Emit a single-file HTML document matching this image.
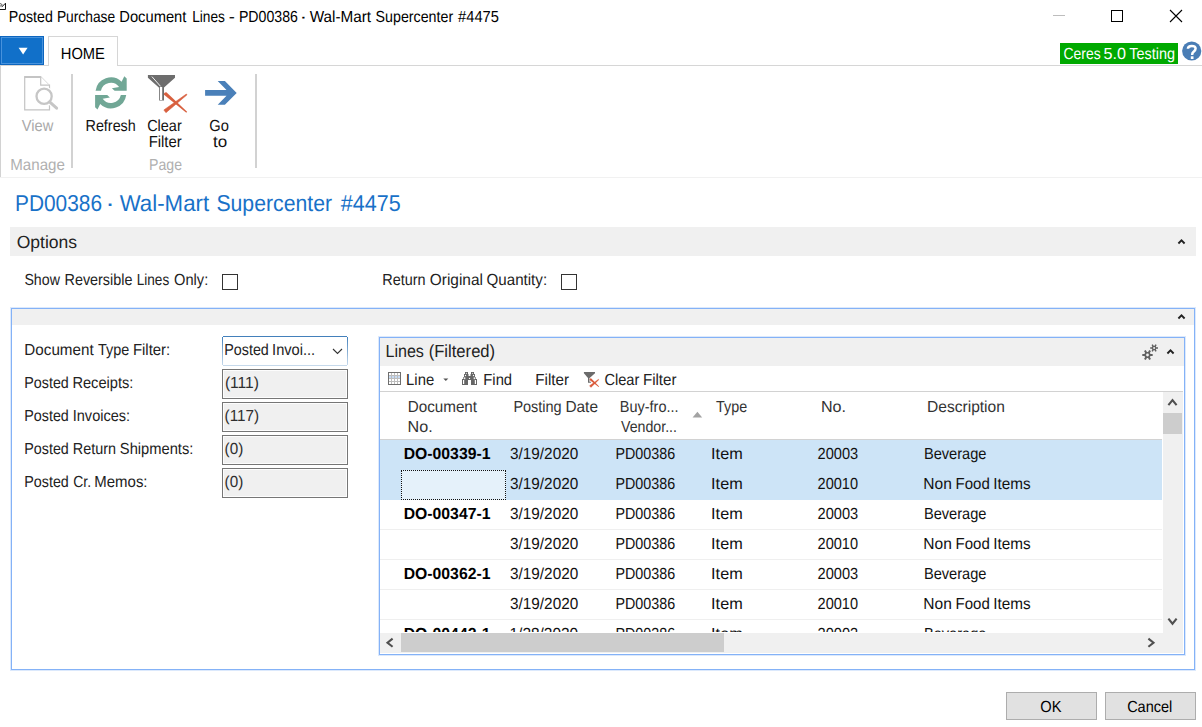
<!DOCTYPE html>
<html>
<head>
<meta charset="utf-8">
<title>Posted Purchase Document Lines</title>
<style>
*{box-sizing:border-box;margin:0;padding:0}
html,body{width:1202px;height:727px;overflow:hidden;background:#fff}
body{font-family:"Liberation Sans",sans-serif;color:#000;position:relative;font-size:16px;text-rendering:geometricPrecision}
.t{position:absolute;left:0;top:0;white-space:nowrap;line-height:1;transform-origin:0 0}
.b{position:absolute}
</style>
</head>
<body>
<!-- TITLE BAR -->
<svg class="b" style="left:0;top:2px" width="8" height="9" viewBox="0 0 8 9"><path d="M0 7.5 L5.5 7.5 L5.5 1.2 L1.6 5.1" stroke="#151515" stroke-width="1" fill="none"/><path d="M0 1.6 Q1.9 1.6 2.3 3.2 M0 4 Q1.2 4.2 1.8 3.2" stroke="#333" stroke-width="0.8" fill="none"/></svg>
<div class="b" style="left:1053px;top:15px;width:12px;height:1px;background:#bdbdbd"></div>
<div class="b" style="left:1111px;top:10px;width:12px;height:12px;border:1px solid #000"></div>
<svg class="b" style="left:1169px;top:9px" width="14" height="14" viewBox="0 0 14 14"><path d="M1 1 L13 13 M13 1 L1 13" stroke="#000" stroke-width="1.1" fill="none"/></svg>

<!-- RIBBON TABS -->
<div class="b" style="left:0;top:65px;width:1202px;height:1px;background:#d6d6d6"></div>
<div class="b" style="left:0;top:36px;width:44px;height:29px;background:#1170c9;border:1px solid #0d66bf;box-shadow:inset 0 0 0 1px #4792dc"></div>
<svg class="b" style="left:18px;top:47px" width="11" height="8" viewBox="0 0 11 8"><path d="M0.6 0.7 L9.6 0.7 L5.1 7.6 Z" fill="#fff"/></svg>
<div class="b" style="left:48px;top:36px;width:70px;height:30px;background:#fff;border:1px solid #d6d6d6;border-bottom:none"></div>
<div class="b" style="left:1060px;top:43px;width:118px;height:21px;background:#00a900"></div>
<svg class="b" style="left:1182px;top:41px" width="20" height="20" viewBox="0 0 20 20"><circle cx="9.7" cy="10" r="9.6" fill="#4a7db5"/><path d="M5.9 7.7 Q6 4.9 9.8 4.9 Q13.6 4.9 13.6 7.6 Q13.6 9.3 11.6 10.8 Q10.1 12 10.1 13.9" stroke="#fff" stroke-width="2.5" fill="none"/><rect x="8.8" y="15.3" width="2.7" height="2.7" fill="#fff"/></svg>

<!-- RIBBON BODY -->
<div class="b" style="left:0;top:66px;width:1px;height:112px;background:#d2d2d2"></div>
<div class="b" style="left:0;top:177px;width:1202px;height:1px;background:#f1f1f1"></div>
<div class="b" style="left:71px;top:74px;width:2px;height:94px;background:#d2d2d2"></div>
<div class="b" style="left:255px;top:74px;width:2px;height:94px;background:#d2d2d2"></div>

<!-- icons -->
<svg class="b" style="left:23px;top:75px" width="38" height="38" viewBox="0 0 38 38">
  <path d="M1.7 2 L1.7 34.9 L26.5 34.9 L26.5 10.2 L17.7 10.2 L17.7 2" fill="none" stroke="#c4c4c4" stroke-width="1.2"/>
  <path d="M1.1 2 L18.3 2" stroke="#c4c4c4" stroke-width="2" fill="none"/>
  <path d="M18.2 1.8 L26.3 10" stroke="#d4d4d4" stroke-width="0.9" fill="none"/>
  <circle cx="21.1" cy="21.3" r="10" fill="#fff"/>
  <path d="M26.4 26.6 L36 35" stroke="#fff" stroke-width="5.5" stroke-linecap="round"/>
  <circle cx="21.1" cy="21.3" r="7.6" fill="#fff" stroke="#c6c6c6" stroke-width="2.3"/>
  <path d="M26.6 26.9 L33.6 33.2" stroke="#c6c6c6" stroke-width="3" stroke-linecap="round"/>
</svg>
<svg class="b" style="left:94px;top:76px" width="34" height="35" viewBox="0 0 34 35">
  <path d="M1.57 14.8 A15.5 15.5 0 0 1 27.6 5.7 L30.3 0.3 L32.7 2.5 L32.7 14.8 L20.6 14.8 L17.9 12.3 L25.13 11.07 A10.2 10.2 0 0 0 6.96 14.8 Z" fill="#71a796"/>
  <path d="M32.23 19 A15.5 15.5 0 0 1 6.2 28.1 L3.5 33.5 L1.1 31.3 L1.1 19 L13.2 19 L15.9 21.5 L8.67 22.73 A10.2 10.2 0 0 0 26.84 19 Z" fill="#71a796"/>
</svg>
<svg class="b" style="left:147px;top:74px" width="42" height="40" viewBox="0 0 42 40">
  <path d="M0.9 1 L28 1 L28 3.75 L17 13.4 L17 26.6 L12.1 26.6 L12.1 13.7 L0.9 3.75 Z" fill="#6d6d6d"/>
  <path d="M12.9 13 L15.2 13 L15.2 26 L12.9 26 Z" fill="#fff"/>
  <path d="M4.9 2.6 L13.6 12.4" stroke="#f4f4f4" stroke-width="1" fill="none"/>
  <path d="M17 20.86 L39.3 38.75 L40.1 37.85 L19.38 18.14 Q16.6 18 17 20.86 Z" fill="#d8603f"/>
  <path d="M18.94 38.64 L16.86 35.96 L39.4 20 L40 20.8 Z" fill="#d8603f" stroke="#d8603f" stroke-width="0.6" stroke-linejoin="round"/>
</svg>
<svg class="b" style="left:204px;top:80px" width="34" height="26" viewBox="0 0 34 26">
  <path d="M1.1 10 L22.5 10 L13.7 1.1 L20.9 1.1 L32.7 12.9 L20.9 24.7 L13.7 24.7 L22.5 15.8 L1.1 15.8 Z" fill="#4a80b9"/>
</svg>

<!-- OPTIONS -->
<div class="b" style="left:10px;top:227px;width:1186px;height:29px;background:#f0f0f0"></div>
<svg class="b" style="left:1177px;top:238px" width="9" height="7" viewBox="0 0 9 7"><path d="M1.4 5.5 L4.5 2.4 L7.6 5.5" stroke="#222" stroke-width="1.9" fill="none"/></svg>
<div class="b" style="left:222px;top:274px;width:16px;height:16px;border:1px solid #333;background:#fff"></div>
<div class="b" style="left:561px;top:274px;width:16px;height:16px;border:1px solid #333;background:#fff"></div>

<!-- OUTER GROUP -->
<div class="b" style="left:10px;top:307px;width:1186px;height:364px;border:1px solid #dce9fc;background:#fff"></div>
<div class="b" style="left:11px;top:308px;width:1184px;height:362px;border:1px solid #84b2f7;background:#fff"></div>
<div class="b" style="left:12px;top:309px;width:1182px;height:16px;background:#f0f0f0"></div>
<svg class="b" style="left:1177px;top:313px" width="9" height="7" viewBox="0 0 9 7"><path d="M1.4 5.5 L4.5 2.4 L7.6 5.5" stroke="#222" stroke-width="1.9" fill="none"/></svg>

<!-- LEFT FIELD BOXES -->
<div class="b" style="left:223px;top:336px;width:124px;height:1px;background:#4380bb"></div>
<div class="b" style="left:223px;top:365px;width:124px;height:1px;background:#c6d9eb"></div>
<div class="b" style="left:222px;top:337px;width:1px;height:28px;background:linear-gradient(#4380bb,#c6d9eb)"></div>
<div class="b" style="left:347px;top:337px;width:1px;height:28px;background:linear-gradient(#4380bb,#c6d9eb)"></div>
<svg class="b" style="left:332px;top:348px" width="11" height="7" viewBox="0 0 11 7"><path d="M1 1 L5.5 5.5 L10 1" stroke="#333" stroke-width="1.1" fill="none"/></svg>
<div class="b" style="left:222px;top:369px;width:126px;height:30px;border:1px solid #767676;background:#f0f0f0;box-shadow:inset 0 0 0 1px #fdfdfd"></div>
<div class="b" style="left:222px;top:402px;width:126px;height:30px;border:1px solid #767676;background:#f0f0f0;box-shadow:inset 0 0 0 1px #fdfdfd"></div>
<div class="b" style="left:222px;top:435px;width:126px;height:30px;border:1px solid #767676;background:#f0f0f0;box-shadow:inset 0 0 0 1px #fdfdfd"></div>
<div class="b" style="left:222px;top:468px;width:126px;height:30px;border:1px solid #767676;background:#f0f0f0;box-shadow:inset 0 0 0 1px #fdfdfd"></div>

<!-- LINES PART -->
<div class="b" style="left:378px;top:336px;width:808px;height:320px;border:1px solid #dce9fc;background:#fff"></div>
<div class="b" style="left:379px;top:337px;width:806px;height:318px;border:1px solid #84b2f7;background:#fff"></div>
<div class="b" style="left:380px;top:338px;width:804px;height:28px;background:#f0f0f0"></div>
<svg class="b" style="left:1166px;top:348px" width="9" height="7" viewBox="0 0 9 7"><path d="M1.4 5.5 L4.5 2.4 L7.6 5.5" stroke="#222" stroke-width="1.9" fill="none"/></svg>
<!-- gear -->
<svg class="b" style="left:1141px;top:343px" width="18" height="18" viewBox="0 0 18 18">
  <g stroke="#606060" stroke-width="2" fill="none"><path d="M1.3 12h10.4M3.9 7.5l5.2 9M9.1 7.5l-5.2 9"/></g>
  <circle cx="6.5" cy="12" r="3.1" fill="#606060"/><circle cx="6.5" cy="12" r="1.4" fill="#f0f0f0"/>
  <g stroke="#606060" stroke-width="1.5" fill="none"><path d="M9.2 5h7.8M11.15 1.6l3.9 6.8M15.05 1.6l-3.9 6.8"/></g>
  <circle cx="13.1" cy="5" r="2.3" fill="#606060"/><circle cx="13.1" cy="5" r="1" fill="#f0f0f0"/>
</svg>
<!-- toolbar -->
<svg class="b" style="left:388px;top:372px" width="13" height="13" viewBox="0 0 13 13">
  <rect x="0" y="0" width="13" height="13" fill="#6e6e6e"/>
  <rect x="1" y="1" width="11" height="11" fill="#bdbdbd"/>
  <g fill="#fff"><rect x="1" y="1" width="2" height="2"/><rect x="4" y="1" width="2" height="2"/><rect x="7" y="1" width="2" height="2"/><rect x="10" y="1" width="2" height="2"/>
  <rect x="1" y="7" width="2" height="2"/><rect x="4" y="7" width="2" height="2"/><rect x="7" y="7" width="2" height="2"/><rect x="10" y="7" width="2" height="2"/>
  <rect x="1" y="10" width="2" height="2"/><rect x="4" y="10" width="2" height="2"/><rect x="7" y="10" width="2" height="2"/><rect x="10" y="10" width="2" height="2"/></g>
  <g fill="#c6daf3"><rect x="1" y="4" width="2" height="2"/><rect x="4" y="4" width="2" height="2"/><rect x="7" y="4" width="2" height="2"/><rect x="10" y="4" width="2" height="2"/></g>
</svg>
<svg class="b" style="left:443px;top:378px" width="6" height="4" viewBox="0 0 6 4"><path d="M0.3 0.4 L5.3 0.4 L2.8 3 Z" fill="#555"/></svg>
<svg class="b" style="left:462px;top:372px" width="15" height="13" viewBox="0 0 15 13">
  <g fill="#666"><rect x="3" y="0" width="3" height="2.2"/><rect x="2" y="2" width="4.5" height="3.2"/><rect x="1.3" y="5" width="5.2" height="2.2"/><rect x="0" y="7" width="6" height="6"/>
  <rect x="6" y="4" width="3" height="4"/>
  <rect x="9" y="0" width="3" height="2.2"/><rect x="8.5" y="2" width="4.5" height="3.2"/><rect x="8.5" y="5" width="5.2" height="2.2"/><rect x="9" y="7" width="6" height="6"/></g>
  <g fill="#fff"><circle cx="4.4" cy="1.2" r="0.55"/><circle cx="3.5" cy="3.5" r="0.65"/><rect x="1" y="8" width="1.2" height="4"/><rect x="2.1" y="5.4" width="1.2" height="1.8"/>
  <circle cx="7.5" cy="6.4" r="0.65"/>
  <circle cx="10.6" cy="1.2" r="0.55"/><circle cx="11.5" cy="3.5" r="0.65"/><rect x="12.8" y="8" width="1.2" height="4"/><rect x="11.7" y="5.4" width="1.2" height="1.8"/></g>
</svg>
<svg class="b" style="left:583px;top:371px" width="18" height="18" viewBox="0 0 18 18">
  <path d="M0.9 1 L12 1 L12 2.2 L6.6 6.9 L5 6.9 L0.9 2.2 Z" fill="#6b6b6b"/>
  <path d="M5 6.4 L6.4 6.4 L6.4 10.8 L7.9 10.8 L7.9 11.8 L5 11.8 Z" fill="#6b6b6b"/>
  <path d="M6.58 9.03 L15.64 16 L16.16 15.4 L8.02 7.37 Q6.3 7.4 6.58 9.03 Z" fill="#da5a3a"/>
  <path d="M7.91 16.44 L6.49 14.76 L15.47 8.13 L15.93 8.67 Z" fill="#da5a3a" stroke="#da5a3a" stroke-width="0.3" stroke-linejoin="round"/>
</svg>
<div class="b" style="left:380px;top:391px;width:803px;height:1px;background:#d2d2d2"></div>
<!-- header sort arrow -->
<svg class="b" style="left:692px;top:411px" width="11" height="7" viewBox="0 0 11 7"><path d="M0.6 6.4 L5.4 0.8 L10.2 6.4 Z" fill="#a3a3a3"/></svg>
<div class="b" style="left:380px;top:439px;width:782px;height:1px;background:#d2d2d2"></div>
<!-- rows -->
<div class="b" style="left:380px;top:440px;width:782px;height:60px;background:#cde4f7"></div>
<div class="b" style="left:401px;top:470px;width:105px;height:30px;background:#e5f1fa;border:1px dotted #111"></div>
<div class="b" style="left:380px;top:529px;width:782px;height:1px;background:#efefef"></div>
<div class="b" style="left:380px;top:559px;width:782px;height:1px;background:#efefef"></div>
<div class="b" style="left:380px;top:589px;width:782px;height:1px;background:#efefef"></div>
<div class="b" style="left:380px;top:619px;width:782px;height:1px;background:#efefef"></div>
<div class="t" style="font-size:16px;color:#000;font-weight:bold;transform:translate(403.70px,447px) scaleX(0.9850)">DO-00339-1</div>
<div class="t" style="font-size:16px;color:#111;transform:translate(510.03px,447px) scaleX(0.9579)">3/19/2020</div>
<div class="t" style="font-size:16px;color:#111;transform:translate(615.45px,447px) scaleX(0.8950)">PD00386</div>
<div class="t" style="font-size:16px;color:#111;transform:translate(711.11px,447px) scaleX(1.0141)">Item</div>
<div class="t" style="font-size:16px;color:#111;transform:translate(817.55px,447px) scaleX(0.9121)">20003</div>
<div class="t" style="font-size:16px;color:#111;transform:translate(923.90px,447px) scaleX(0.9128)">Beverage</div>
<div class="t" style="font-size:16px;color:#111;transform:translate(510.03px,477px) scaleX(0.9579)">3/19/2020</div>
<div class="t" style="font-size:16px;color:#111;transform:translate(615.45px,477px) scaleX(0.8950)">PD00386</div>
<div class="t" style="font-size:16px;color:#111;transform:translate(711.11px,477px) scaleX(1.0141)">Item</div>
<div class="t" style="font-size:16px;color:#111;transform:translate(817.61px,477px) scaleX(0.9082)">20010</div>
<div class="t" style="font-size:16px;color:#111;transform:translate(923.30px,477px) scaleX(0.9702)">Non </div>
<div class="t" style="font-size:16px;color:#111;transform:translate(955.59px,477px) scaleX(0.9365)">Food </div>
<div class="t" style="font-size:16px;color:#111;transform:translate(993.29px,477px) scaleX(0.9565)">Items</div>
<div class="t" style="font-size:16px;color:#000;font-weight:bold;transform:translate(403.70px,507px) scaleX(0.9850)">DO-00347-1</div>
<div class="t" style="font-size:16px;color:#111;transform:translate(510.03px,507px) scaleX(0.9579)">3/19/2020</div>
<div class="t" style="font-size:16px;color:#111;transform:translate(615.45px,507px) scaleX(0.8950)">PD00386</div>
<div class="t" style="font-size:16px;color:#111;transform:translate(711.11px,507px) scaleX(1.0141)">Item</div>
<div class="t" style="font-size:16px;color:#111;transform:translate(817.55px,507px) scaleX(0.9121)">20003</div>
<div class="t" style="font-size:16px;color:#111;transform:translate(923.90px,507px) scaleX(0.9128)">Beverage</div>
<div class="t" style="font-size:16px;color:#111;transform:translate(510.03px,537px) scaleX(0.9579)">3/19/2020</div>
<div class="t" style="font-size:16px;color:#111;transform:translate(615.45px,537px) scaleX(0.8950)">PD00386</div>
<div class="t" style="font-size:16px;color:#111;transform:translate(711.11px,537px) scaleX(1.0141)">Item</div>
<div class="t" style="font-size:16px;color:#111;transform:translate(817.61px,537px) scaleX(0.9082)">20010</div>
<div class="t" style="font-size:16px;color:#111;transform:translate(923.30px,537px) scaleX(0.9702)">Non </div>
<div class="t" style="font-size:16px;color:#111;transform:translate(955.59px,537px) scaleX(0.9365)">Food </div>
<div class="t" style="font-size:16px;color:#111;transform:translate(993.29px,537px) scaleX(0.9565)">Items</div>
<div class="t" style="font-size:16px;color:#000;font-weight:bold;transform:translate(403.70px,567px) scaleX(0.9850)">DO-00362-1</div>
<div class="t" style="font-size:16px;color:#111;transform:translate(510.03px,567px) scaleX(0.9579)">3/19/2020</div>
<div class="t" style="font-size:16px;color:#111;transform:translate(615.45px,567px) scaleX(0.8950)">PD00386</div>
<div class="t" style="font-size:16px;color:#111;transform:translate(711.11px,567px) scaleX(1.0141)">Item</div>
<div class="t" style="font-size:16px;color:#111;transform:translate(817.55px,567px) scaleX(0.9121)">20003</div>
<div class="t" style="font-size:16px;color:#111;transform:translate(923.90px,567px) scaleX(0.9128)">Beverage</div>
<div class="t" style="font-size:16px;color:#111;transform:translate(510.03px,597px) scaleX(0.9579)">3/19/2020</div>
<div class="t" style="font-size:16px;color:#111;transform:translate(615.45px,597px) scaleX(0.8950)">PD00386</div>
<div class="t" style="font-size:16px;color:#111;transform:translate(711.11px,597px) scaleX(1.0141)">Item</div>
<div class="t" style="font-size:16px;color:#111;transform:translate(817.61px,597px) scaleX(0.9082)">20010</div>
<div class="t" style="font-size:16px;color:#111;transform:translate(923.30px,597px) scaleX(0.9702)">Non </div>
<div class="t" style="font-size:16px;color:#111;transform:translate(955.59px,597px) scaleX(0.9365)">Food </div>
<div class="t" style="font-size:16px;color:#111;transform:translate(993.29px,597px) scaleX(0.9565)">Items</div>
<div class="t" style="font-size:16px;color:#000;font-weight:bold;transform:translate(403.70px,627px) scaleX(0.9850)">DO-00442-1</div>
<div class="t" style="font-size:16px;color:#111;transform:translate(509.54px,627px) scaleX(0.9630)">1/28/2020</div>
<div class="t" style="font-size:16px;color:#111;transform:translate(615.45px,627px) scaleX(0.8950)">PD00386</div>
<div class="t" style="font-size:16px;color:#111;transform:translate(711.11px,627px) scaleX(1.0141)">Item</div>
<div class="t" style="font-size:16px;color:#111;transform:translate(817.55px,627px) scaleX(0.9121)">20003</div>
<div class="t" style="font-size:16px;color:#111;transform:translate(923.90px,627px) scaleX(0.9128)">Beverage</div>
<!-- scrollbars -->
<div class="b" style="left:380px;top:632px;width:783px;height:1px;background:#fff"></div>
<div class="b" style="left:1163px;top:392px;width:20px;height:261px;background:#f0f0f0"></div>
<div class="b" style="left:380px;top:633px;width:803px;height:20px;background:#f0f0f0"></div>
<div class="b" style="left:1163px;top:413px;width:19px;height:21px;background:#cdcdcd"></div>
<div class="b" style="left:401px;top:633px;width:323px;height:19px;background:#cdcdcd"></div>
<svg class="b" style="left:1166px;top:397px" width="13" height="11" viewBox="0 0 13 11"><path d="M2.4 8.2 L6.5 3.1 L10.6 8.2" stroke="#505050" stroke-width="2.1" fill="none"/></svg>
<svg class="b" style="left:1166px;top:616px" width="13" height="11" viewBox="0 0 13 11"><path d="M2.4 2.6 L6.5 7.7 L10.6 2.6" stroke="#505050" stroke-width="2.1" fill="none"/></svg>
<svg class="b" style="left:384px;top:636px" width="12" height="14" viewBox="0 0 12 14"><path d="M8.6 2.6 L3.5 6.7 L8.6 10.8" stroke="#505050" stroke-width="2.1" fill="none"/></svg>
<svg class="b" style="left:1145px;top:636px" width="12" height="14" viewBox="0 0 12 14"><path d="M3.4 2.6 L8.5 6.7 L3.4 10.8" stroke="#505050" stroke-width="2.1" fill="none"/></svg>

<!-- BUTTONS -->
<div class="b" style="left:1006px;top:692px;width:91px;height:28px;border:1px solid #adadad;background:#e1e1e1"></div>
<div class="b" style="left:1105px;top:692px;width:91px;height:28px;border:1px solid #adadad;background:#e1e1e1"></div>

<div class="t" style="font-size:16px;color:#000;transform:translate(8.67px,10px) scaleX(0.8868)">Posted </div>
<div class="t" style="font-size:16px;color:#000;transform:translate(56.89px,10px) scaleX(0.8618)">Purchase </div>
<div class="t" style="font-size:16px;color:#000;transform:translate(119.29px,10px) scaleX(0.9194)">Document </div>
<div class="t" style="font-size:16px;color:#000;transform:translate(192.18px,10px) scaleX(0.8566)">Lines </div>
<div class="t" style="font-size:16px;color:#000;transform:translate(228.65px,10px) scaleX(1.1451)">- </div>
<div class="t" style="font-size:16px;color:#000;transform:translate(238.95px,10px) scaleX(0.8826)">PD00386 </div>
<div class="t" style="font-size:16px;color:#000;transform:translate(299.61px,10px) scaleX(1.4520)">· </div>
<div class="t" style="font-size:16px;color:#000;transform:translate(309.64px,10px) scaleX(0.9561)">Wal-Mart </div>
<div class="t" style="font-size:16px;color:#000;transform:translate(375.54px,10px) scaleX(0.8901)">Supercenter </div>
<div class="t" style="font-size:16px;color:#000;transform:translate(458.10px,10px) scaleX(0.9150)">#4475</div>
<div class="t" style="font-size:16px;color:#000;transform:translate(60.76px,47px) scaleX(0.9203)">HOME</div>
<div class="t" style="font-size:16px;color:#fff;transform:translate(1063.46px,47px) scaleX(0.8701)">Ceres </div>
<div class="t" style="font-size:16px;color:#fff;transform:translate(1103.60px,47px) scaleX(1.0107)">5.0 </div>
<div class="t" style="font-size:16px;color:#fff;transform:translate(1129.20px,47px) scaleX(0.9025)">Testing</div>
<div class="t" style="font-size:16px;color:#a9a9a9;transform:translate(21.82px,119px) scaleX(0.9162)">View</div>
<div class="t" style="font-size:16px;color:#b0b0b0;transform:translate(10.22px,158px) scaleX(0.9456)">Manage</div>
<div class="t" style="font-size:16px;color:#111;transform:translate(85.51px,119px) scaleX(0.8973)">Refresh</div>
<div class="t" style="font-size:16px;color:#111;transform:translate(147.14px,119px) scaleX(0.9041)">Clear</div>
<div class="t" style="font-size:16px;color:#111;transform:translate(148.67px,135px) scaleX(0.9298)">Filter</div>
<div class="t" style="font-size:16px;color:#111;transform:translate(209.37px,119px) scaleX(0.9180)">Go</div>
<div class="t" style="font-size:16px;color:#111;transform:translate(212.95px,135px) scaleX(1.0617)">to</div>
<div class="t" style="font-size:16px;color:#b0b0b0;transform:translate(149.07px,158px) scaleX(0.8820)">Page</div>
<div class="t" style="font-size:23px;color:#1871c8;transform:translate(14.96px,192px) scaleX(0.9074)">PD00386 </div>
<div class="t" style="font-size:23px;color:#1871c8;transform:translate(105.26px,192px) scaleX(1.2472)">· </div>
<div class="t" style="font-size:23px;color:#1871c8;transform:translate(119.68px,192px) scaleX(0.9681)">Wal-Mart </div>
<div class="t" style="font-size:23px;color:#1871c8;transform:translate(216.38px,192px) scaleX(0.9234)">Supercenter </div>
<div class="t" style="font-size:23px;color:#1871c8;transform:translate(340.78px,192px) scaleX(0.9363)">#4475</div>
<div class="t" style="font-size:17.5px;color:#222;transform:translate(16.72px,234px) scaleX(1.0008)">Options</div>
<div class="t" style="font-size:16px;color:#222;transform:translate(24.42px,273px) scaleX(0.8854)">Show </div>
<div class="t" style="font-size:16px;color:#222;transform:translate(64.51px,273px) scaleX(0.8985)">Reversible </div>
<div class="t" style="font-size:16px;color:#222;transform:translate(136.72px,273px) scaleX(0.8485)">Lines </div>
<div class="t" style="font-size:16px;color:#222;transform:translate(174.06px,273px) scaleX(0.9148)">Only:</div>
<div class="t" style="font-size:16px;color:#222;transform:translate(382.36px,273px) scaleX(0.9010)">Return </div>
<div class="t" style="font-size:16px;color:#222;transform:translate(429.81px,273px) scaleX(0.9633)">Original </div>
<div class="t" style="font-size:16px;color:#222;transform:translate(486.52px,273px) scaleX(0.9460)">Quantity:</div>
<div class="t" style="font-size:16px;color:#222;transform:translate(24.36px,343px) scaleX(0.9495)">Document </div>
<div class="t" style="font-size:16px;color:#222;transform:translate(97.97px,343px) scaleX(0.9006)">Type </div>
<div class="t" style="font-size:16px;color:#222;transform:translate(132.88px,343px) scaleX(0.9333)">Filter:</div>
<div class="t" style="font-size:16px;color:#222;transform:translate(24.31px,376px) scaleX(0.8926)">Posted </div>
<div class="t" style="font-size:16px;color:#222;transform:translate(72.42px,376px) scaleX(0.9138)">Receipts:</div>
<div class="t" style="font-size:16px;color:#222;transform:translate(24.31px,409px) scaleX(0.8926)">Posted </div>
<div class="t" style="font-size:16px;color:#222;transform:translate(72.75px,409px) scaleX(0.9082)">Invoices:</div>
<div class="t" style="font-size:16px;color:#222;transform:translate(24.31px,442px) scaleX(0.8926)">Posted </div>
<div class="t" style="font-size:16px;color:#222;transform:translate(72.87px,442px) scaleX(0.8995)">Return </div>
<div class="t" style="font-size:16px;color:#222;transform:translate(119.83px,442px) scaleX(0.9184)">Shipments:</div>
<div class="t" style="font-size:16px;color:#222;transform:translate(24.31px,475px) scaleX(0.8926)">Posted </div>
<div class="t" style="font-size:16px;color:#222;transform:translate(73.22px,475px) scaleX(0.8699)">Cr. </div>
<div class="t" style="font-size:16px;color:#222;transform:translate(94.36px,475px) scaleX(0.9342)">Memos:</div>
<div class="t" style="font-size:16px;color:#222;transform:translate(224.31px,343px) scaleX(0.8935)">Posted </div>
<div class="t" style="font-size:16px;color:#222;transform:translate(272.06px,343px) scaleX(0.9147)">Invoi...</div>
<div class="t" style="font-size:16px;color:#2e2e2e;transform:translate(224.88px,376px) scaleX(0.9744)">(111)</div>
<div class="t" style="font-size:16px;color:#2e2e2e;transform:translate(224.57px,409px) scaleX(0.9524)">(117)</div>
<div class="t" style="font-size:16px;color:#2e2e2e;transform:translate(224.58px,442px) scaleX(0.9525)">(0)</div>
<div class="t" style="font-size:16px;color:#2e2e2e;transform:translate(224.58px,475px) scaleX(0.9525)">(0)</div>
<div class="t" style="font-size:17.5px;color:#222;transform:translate(385.44px,343px) scaleX(0.9196)">Lines </div>
<div class="t" style="font-size:17.5px;color:#222;transform:translate(428.70px,343px) scaleX(0.9489)">(Filtered)</div>
<div class="t" style="font-size:16px;color:#222;transform:translate(406.12px,373px) scaleX(0.9274)">Line</div>
<div class="t" style="font-size:16px;color:#222;transform:translate(483.30px,373px) scaleX(0.9248)">Find</div>
<div class="t" style="font-size:16px;color:#222;transform:translate(535.31px,373px) scaleX(0.9480)">Filter</div>
<div class="t" style="font-size:16px;color:#222;transform:translate(604.40px,373px) scaleX(0.9131)">Clear </div>
<div class="t" style="font-size:16px;color:#222;transform:translate(642.89px,373px) scaleX(0.9460)">Filter</div>
<div class="t" style="font-size:16px;color:#333;transform:translate(407.77px,400px) scaleX(0.9500)">Document</div>
<div class="t" style="font-size:16px;color:#333;transform:translate(407.55px,420px) scaleX(1.0076)">No.</div>
<div class="t" style="font-size:16px;color:#333;transform:translate(513.38px,400px) scaleX(0.9050)">Posting </div>
<div class="t" style="font-size:16px;color:#333;transform:translate(565.41px,400px) scaleX(0.9628)">Date</div>
<div class="t" style="font-size:16px;color:#333;transform:translate(619.86px,400px) scaleX(0.9035)">Buy-fro...</div>
<div class="t" style="font-size:16px;color:#333;transform:translate(620.95px,420px) scaleX(0.8868)">Vendor...</div>
<div class="t" style="font-size:16px;color:#333;transform:translate(716.10px,400px) scaleX(0.8978)">Type</div>
<div class="t" style="font-size:16px;color:#333;transform:translate(820.96px,400px) scaleX(1.0060)">No.</div>
<div class="t" style="font-size:16px;color:#333;transform:translate(927.05px,400px) scaleX(0.9724)">Description</div>
<div class="t" style="font-size:16px;color:#000;transform:translate(1040.29px,700px) scaleX(0.9165)">OK</div>
<div class="t" style="font-size:16px;color:#000;transform:translate(1127.14px,700px) scaleX(0.9072)">Cancel</div>
</body>
</html>
